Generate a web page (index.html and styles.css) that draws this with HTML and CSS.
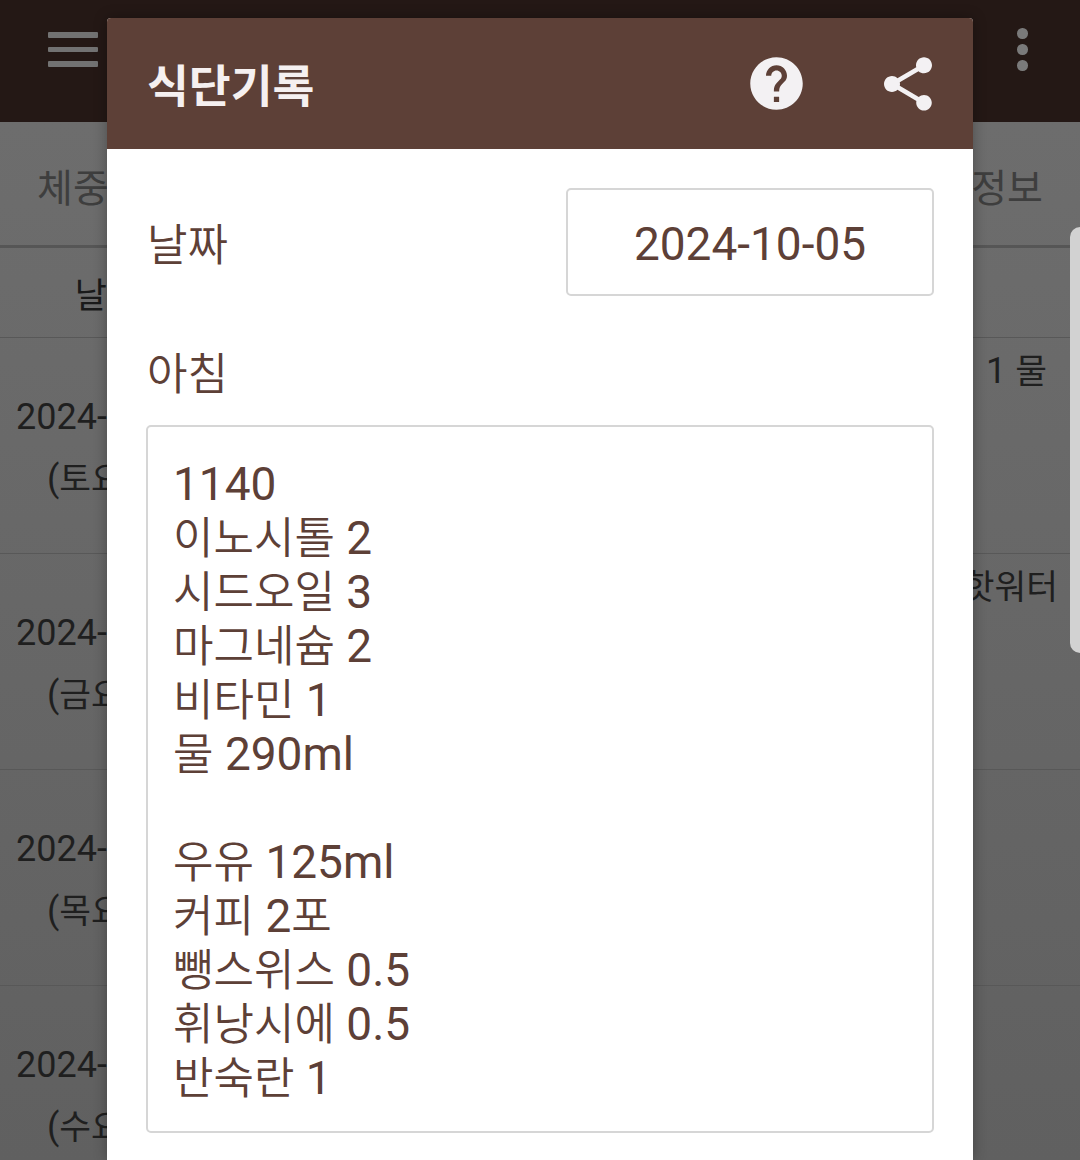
FILE: index.html
```html
<!DOCTYPE html>
<html lang="ko">
<head>
<meta charset="utf-8">
<title>식단기록</title>
<link rel="stylesheet" href="styles.css">
</head>
<body>
<div class="page">
  <header class="appbar">
    <div class="burger"><span></span><span></span><span></span></div>
    <div class="kebab"><span></span><span></span><span></span></div>
  </header>
  <nav class="tabs"><span>체중</span><span>정보</span></nav>
  <div class="thead"><div class="date-col">날짜</div></div>
  <div class="row">
    <div class="date-col">2024-10-05<br>(<span class="ko">토요일</span>)</div>
    <div class="note">1 <span class="ko">물</span></div>
  </div>
  <div class="row">
    <div class="date-col">2024-10-04<br>(<span class="ko">금요일</span>)</div>
    <div class="note wide"><span class="ko">핫워터</span></div>
  </div>
  <div class="row">
    <div class="date-col">2024-10-03<br>(<span class="ko">목요일</span>)</div>
    <div class="note"></div>
  </div>
  <div class="row">
    <div class="date-col">2024-10-02<br>(<span class="ko">수요일</span>)</div>
    <div class="note"></div>
  </div>
</div>
<div class="sidehandle"></div>
<section class="modal">
  <div class="modal-head">
    <h1>식단기록</h1>
    <svg class="ico-help" viewBox="0 0 24 24"><path d="M12 2C6.48 2 2 6.48 2 12s4.48 10 10 10 10-4.48 10-10S17.52 2 12 2zm1 17h-2v-2h2v2zm2.07-7.75l-.9.92C13.45 12.9 13 13.5 13 15h-2v-.5c0-1.1.45-2.1 1.17-2.83l1.24-1.26c.37-.36.59-.86.59-1.41 0-1.1-.9-2-2-2s-2 .9-2 2H8c0-2.21 1.79-4 4-4s4 1.79 4 4c0 .88-.36 1.68-.93 2.25z"/></svg>
    <svg class="ico-share" viewBox="0 0 24 24"><path d="M18 16.08c-.76 0-1.44.3-1.96.77L8.91 12.7c.05-.23.09-.46.09-.7s-.04-.47-.09-.7l7.05-4.11c.54.5 1.25.81 2.04.81 1.66 0 3-1.34 3-3s-1.34-3-3-3-3 1.34-3 3c0 .24.04.47.09.7L8.04 9.81C7.5 9.31 6.79 9 6 9c-1.66 0-3 1.34-3 3s1.34 3 3 3c.79 0 1.5-.31 2.04-.81l7.12 4.16c-.05.21-.08.43-.08.65 0 1.61 1.31 2.92 2.92 2.92 1.61 0 2.92-1.31 2.92-2.92s-1.31-2.92-2.92-2.92z"/></svg>
  </div>
  <div class="modal-body">
    <div class="date-row">
      <label class="ko">날짜</label>
      <div class="date-input">2024-10-05</div>
    </div>
    <label class="meal-label ko">아침</label>
    <div class="memo">1140
<span class="ko">이노시톨</span> 2
<span class="ko">시드오일</span> 3
<span class="ko">마그네슘</span> 2
<span class="ko">비타민</span> 1
<span class="ko">물</span> 290ml

<span class="ko">우유</span> 125ml
<span class="ko">커피</span> 2<span class="ko">포</span>
<span class="ko">뺑스위스</span> 0.5
<span class="ko">휘낭시에</span> 0.5
<span class="ko">반숙란</span> 1</div>
  </div>
</section>
</body>
</html>
```
FILE: styles.css
```css
html, body {
  margin: 0;
  padding: 0;
  height: 1160px;
  overflow: hidden;
}
body {
  position: relative;
  font-family: Roboto, "Noto Sans CJK KR", sans-serif;
  background: #666;
}
.page {
  height: 1160px;
  overflow: hidden;
  background: linear-gradient(180deg, #6d6d6d 122px, #606060 1160px);
  color: #1f1f1f;
  font-size: 36px;
}
.page .ko {
  font-size: 34.5px;
  line-height: 1;
}
.modal .ko {
  font-size: 44px;
  font-weight: 350;
}
.memo .ko {
  line-height: 1;
}
.appbar {
  height: 122px;
  background: #241815;
  position: relative;
}
.burger {
  position: absolute;
  left: 48px;
  top: 32px;
  width: 50px;
  display: flex;
  flex-direction: column;
  gap: 9px;
}
.burger span {
  display: block;
  height: 5.5px;
  background: #727272;
  border-radius: 1px;
}
.kebab {
  position: absolute;
  left: 1017px;
  top: 28px;
  display: flex;
  flex-direction: column;
  gap: 5.5px;
}
.kebab span {
  width: 10.5px;
  height: 10.5px;
  border-radius: 50%;
  background: #7a7a7a;
}
.tabs {
  height: 126px;
  padding: 3px 37px 0;
  display: flex;
  justify-content: space-between;
  align-items: center;
  border-bottom: 3px solid #565656;
  box-sizing: border-box;
  font-size: 39px;
  color: #3e3e3e;
}
.thead {
  height: 90px;
  display: flex;
  align-items: center;
  border-bottom: 1px solid #585858;
  box-sizing: border-box;
  font-size: 35px;
  color: #1a1a1a;
}
.date-col {
  width: 214px;
  flex: none;
  text-align: center;
}
.row {
  height: 216px;
  box-sizing: border-box;
  border-bottom: 1px solid #585858;
  display: flex;
  justify-content: space-between;
  line-height: 62px;
}
.row .date-col {
  padding-top: 48px;
}
.note {
  padding: 2px 33px 0 0;
  line-height: 62px;
}
.note.wide {
  padding-right: 22px;
}
.sidehandle {
  position: absolute;
  left: 1070px;
  top: 227px;
  width: 10px;
  height: 426px;
  background: #d2d2d2;
  border-radius: 12px 0 0 12px;
}
.modal {
  position: absolute;
  left: 107px;
  top: 18px;
  width: 866px;
  height: 1142px;
  background: #fff;
  border-radius: 4px 4px 0 0;
  color: #5d4037;
  box-shadow: 0 0 14px rgba(0, 0, 0, 0.3);
  font-size: 46px;
}
.modal-head {
  height: 131px;
  background: #5d4037;
  border-radius: 4px 4px 0 0;
  display: flex;
  align-items: center;
  padding: 0 33px 0 40px;
  fill: #f3f1f3;
}
.modal-head h1 {
  flex: 1;
  margin: 0 0 2px;
  font-size: 45.5px;
  font-weight: 700;
  color: #f5f0f0;
}
.ico-help {
  width: 63px;
  height: 63px;
}
.ico-share {
  width: 64px;
  height: 64px;
  margin-left: 68px;
}
.modal-body {
  padding: 39px 39px 0 39px;
}
.date-row {
  display: flex;
  justify-content: space-between;
  align-items: center;
}
.date-row label {
  padding-left: 1px;
}
.date-input {
  width: 368px;
  height: 108px;
  box-sizing: border-box;
  border: 2px solid #d6d6d6;
  border-radius: 5px;
  padding-top: 3px;
  display: flex;
  align-items: center;
  justify-content: center;
}
.meal-label {
  display: block;
  margin: 48px 0 19px;
  padding-left: 1px;
  line-height: 62px;
}
.memo {
  height: 708px;
  box-sizing: border-box;
  border: 2px solid #d6d6d6;
  border-radius: 5px;
  padding: 30px 25px;
  line-height: 54px;
  white-space: pre-line;
}
```
